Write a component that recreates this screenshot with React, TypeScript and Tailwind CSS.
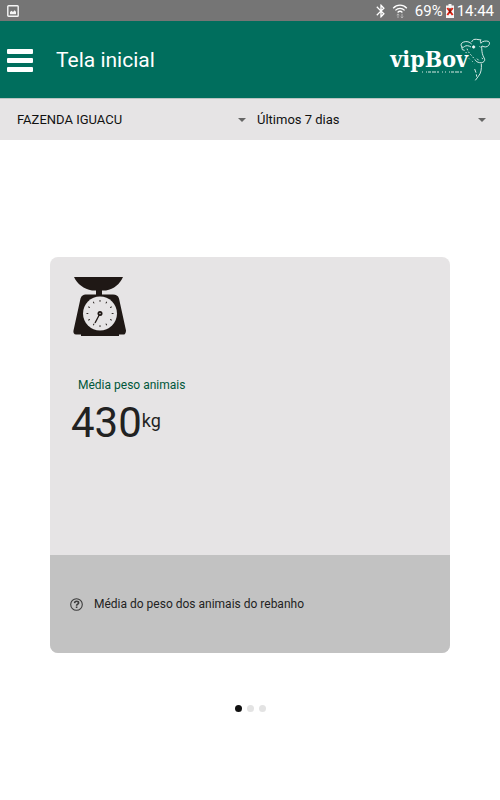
import { useState } from 'react'
import { MdBluetooth } from 'react-icons/md'

const farms = ['FAZENDA IGUACU']
const periods = ['Últimos 7 dias', 'Últimos 30 dias']

const slides = [
  { title: 'Média peso animais', value: '430', unit: 'kg', help: 'Média do peso dos animais do rebanho' },
  { title: 'Média peso animais', value: '430', unit: 'kg', help: 'Média do peso dos animais do rebanho' },
  { title: 'Média peso animais', value: '430', unit: 'kg', help: 'Média do peso dos animais do rebanho' }
]

const ticks = [0, 30, 60, 90, 120, 150, 180, 210, 240, 270, 300, 330]

function StatusBar() {
  return (
    <div className="flex h-[21px] items-center justify-between bg-[#757575] pl-[7px] pr-[6px] text-white">
      <svg className="h-3 w-3" viewBox="0 0 12 12">
        <rect x="0.8" y="0.8" width="10.4" height="10.4" rx="0.8" fill="none" stroke="#f5f5f5" strokeWidth="1.4" />
        <path d="M3 9.2V7l1.6-1.2L6 7l1.6-1.8L9 6.8v2.4z" fill="#f5f5f5" />
      </svg>
      <div className="flex items-center">
        <MdBluetooth className="h-4 w-4" />
        <svg className="ml-[3px] h-4 w-4" viewBox="0 0 16 16" fill="none" stroke="#fff" strokeWidth="1.3">
          <path d="M1.2 5.2C5 1.2 11 1.2 14.8 5.2" />
          <path d="M3.4 7.4c2.6-2.7 6.6-2.7 9.2 0" />
          <path d="M5.6 9.5c1.4-1.4 3.4-1.4 4.8 0" />
          <path d="M6 15V11M4.8 12.2L6 10.8l1.2 1.4M10 10.8V15M8.8 13.6L10 15l1.2-1.4" stroke="#b5b5b5" strokeWidth="1" />
        </svg>
        <span className="ml-[7px] text-[15px] leading-5">69%</span>
        <svg className="ml-[3px] h-[14px] w-2" viewBox="0 0 8 14">
          <path d="M2.5 0h3v1.5H8V14H0V1.5h2.5z" fill="#f5f5f5" />
          <path d="M1.3 4l5.4 7M6.7 4l-5.4 7" stroke="#e02010" strokeWidth="2" />
          <path d="M4 4v5" stroke="#4a1a14" strokeWidth="1.2" />
        </svg>
        <span className="ml-[3px] text-[15px] leading-5">14:44</span>
      </div>
    </div>
  )
}

function Logo() {
  return (
    <div className="flex items-start text-white" aria-label="vipBov">
      <div className="flex flex-col items-end pt-[9px]">
        <span className="font-['DejaVu_Serif_Condensed','DejaVu_Serif',serif] text-[23px] font-bold leading-6">vipBov</span>
        <svg className="mr-1 h-[2px] w-[42px]" viewBox="0 0 42 2">
          <path d="M0 1h42" stroke="#d5e8e4" strokeWidth="1.2" strokeDasharray="1 3 1 1 3 1 4 1 2 3 1 2" />
        </svg>
      </div>
      <svg className="-ml-[9px] h-[45px] w-8" viewBox="12 24 96 135" fill="none" stroke="#e6f2ef" strokeWidth="2.8">
        <path d="M50 36c2-7 8-9 15-8l13 2" />
        <path d="M78 29c-3 5-2 8 0 11" />
        <path d="M77 39c6-6 16-7 23-5 5 3 4 8 1 12-5 6-12 6-20 2" />
        <path d="M50 42c-6-7-16-9-24-6-8 3-9 8-7 12 2 5 6 5 9 2 5-5 14-3 20 1" />
        <path d="M20 50l2 9 7 2" />
        <path d="M80 48c0 12 1 21 4 29 2 6 6 9 5 14-2 6-8 8-15 7-7-1-11-4-14-9" />
        <path d="M36 56c3 9 8 15 15 22l9 11" strokeDasharray="5 5" />
        <path d="M66 86l5 5M80 84l4 3" />
        <path d="M33 66c2 13 8 20 18 27l8 8" strokeDasharray="3 8" />
        <path d="M79 101c1 16-1 29-9 38l-9 12" />
        <path d="M59 117l4 11M64 133l1 7" />
        <circle cx="56" cy="51" r="3.5" fill="#fff" />
        <path d="M74 49l2 3" />
      </svg>
    </div>
  )
}

function Header() {
  return (
    <header className="flex h-[77px] items-center bg-[#006e5d] pl-[7px] pr-[9px] pt-[2px]">
      <button type="button" aria-label="Menu" className="flex w-[26px] flex-col gap-1">
        <span className="h-[5px] rounded-[1px] bg-white" />
        <span className="h-[5px] rounded-[1px] bg-white" />
        <span className="h-[5px] rounded-[1px] bg-white" />
      </button>
      <h1 className="ml-[23px] flex-1 text-[21px] text-white">Tela inicial</h1>
      <Logo />
    </header>
  )
}

function Filter({ label, options }: { label: string; options: string[] }) {
  return (
    <div className="relative flex items-center">
      <select
        aria-label={label}
        className="h-full w-full appearance-none bg-transparent pl-[7px] pr-5 text-[13px] text-[#111111] outline-none"
      >
        {options.map((option) => (
          <option key={option}>{option}</option>
        ))}
      </select>
      <svg className="pointer-events-none absolute right-1 h-1 w-2" viewBox="0 0 8 4">
        <path d="M0 0h8L4 4z" fill="#666" />
      </svg>
    </div>
  )
}

function ScaleIcon() {
  return (
    <svg className="h-[60px] w-[54px]" viewBox="0 0 54 60">
      <path d="M1 1h49c-3 7-9 12-17 13.500h-4v4h11c3 0 5 1 6 4l7 32c0 2-1 4-2 4h-5v1.500H8V58.500H3c-2 0-3-2-2.500-4l7-32c1-3 3-4 5-4H23v-4h-4C11 13 4 8 1 1z" fill="#1f1815" />
      <circle cx="27" cy="37.500" r="17" fill="#e6e4e5" />
      {ticks.map((angle) => (
        <path key={angle} d="M27 24v1.800" stroke="#1f1815" strokeWidth="0.9" transform={`rotate(${angle} 27 37.5)`} />
      ))}
      <path d="M27 37.500l-5 9.500" stroke="#1f1815" strokeWidth="1.300" />
      <circle cx="27" cy="37.500" r="2.500" fill="#1f1815" />
      <circle cx="27" cy="37.500" r="0.700" fill="#e6e4e5" />
    </svg>
  )
}

function HelpIcon() {
  return (
    <svg className="h-[13px] w-[13px]" viewBox="0 0 13 13" fill="none" stroke="#3c3c3c">
      <circle cx="6.500" cy="6.500" r="5.800" strokeWidth="1.100" />
      <path d="M4.500 5.100c.2-1.300 1-1.800 2.100-1.800 1.200 0 2 .7 2 1.600 0 1.300-2 1.300-2 2.800" strokeWidth="1.600" />
      <path d="M6.600 8.600v1.500" strokeWidth="1.600" />
    </svg>
  )
}

function App() {
  const [current, setCurrent] = useState(0)
  const slide = slides[current]

  return (
    <div className="min-h-screen bg-white font-[Roboto,sans-serif]">
      <StatusBar />
      <Header />

      <div className="grid h-[42px] grid-cols-2 border-t border-[#b9c4c1] bg-[#e6e4e5] px-[10px]">
        <Filter label="Fazenda" options={farms} />
        <Filter label="Período" options={periods} />
      </div>

      <main className="px-[50px] pt-[117px]">
        <section className="overflow-hidden rounded-lg bg-[#e6e4e5]">
          <div className="h-[298px] px-[21px] pt-[19px]">
            <div className="pl-[2px]">
              <ScaleIcon />
            </div>
            <h2 className="mt-[41px] pl-[7px] text-[12px] leading-4 text-[#00573a]">{slide.title}</h2>
            <p className="mt-1 flex items-start text-[#222222]">
              <span className="text-[42px] leading-[52px]">{slide.value}</span>
              <span className="pt-3 text-[18px] leading-6">{slide.unit}</span>
            </p>
          </div>
          <div className="flex h-[98px] items-center gap-[11px] bg-[#c2c2c2] px-5 text-[12px] text-[#222222]">
            <HelpIcon />
            <span>{slide.help}</span>
          </div>
        </section>

        <div className="mt-[52px] flex justify-center gap-[5px]">
          {slides.map((_, index) => (
            <button
              key={index}
              type="button"
              aria-label={`Slide ${index + 1}`}
              onClick={() => setCurrent(index)}
              className={`h-[7px] w-[7px] rounded-full ${index === current ? 'bg-[#111111]' : 'bg-[#e3e3e3]'}`}
            />
          ))}
        </div>
      </main>
    </div>
  )
}

export default App
